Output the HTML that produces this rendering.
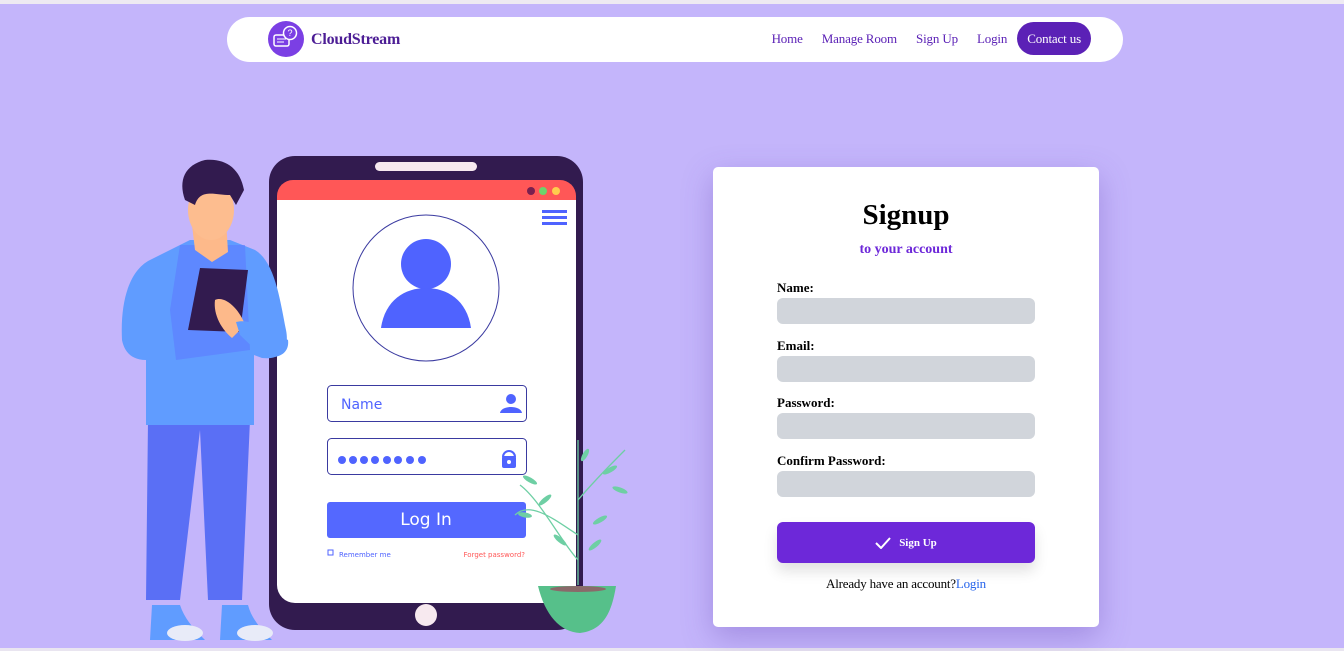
<!DOCTYPE html>
<html><head><meta charset="utf-8"><style>
*{margin:0;padding:0;box-sizing:border-box}
body{width:1344px;height:651px;background:#c4b5fb;font-family:"Liberation Serif",serif;position:relative;overflow:hidden}
.top{position:absolute;left:0;top:0;width:1344px;height:4px;background:#eeeaf2}
.bot{position:absolute;left:0;top:648px;width:1344px;height:3px;background:#e9e5f0}
nav{position:absolute;left:227px;top:17px;width:896px;height:45px;background:#fff;border-radius:23px}
.logo{position:absolute;left:41px;top:4px;width:36px;height:36px;border-radius:50%;background:#7b3fe4}
.brand{position:absolute;left:84px;top:14px;font-weight:bold;font-size:16px;color:#4c1d95;letter-spacing:-0.2px}
.links{position:absolute;right:32px;top:5px;height:33px;display:flex;align-items:center;font-size:13px;color:#5b21b6;letter-spacing:-0.15px}
.links span{margin-left:19px}
.links .c{background:#5b21b6;color:#fff;border-radius:17px;padding:0 10px;height:33px;line-height:33px;margin-left:10px}
.card{position:absolute;left:713px;top:167px;width:386px;height:460px;background:#fff;border-radius:5px;box-shadow:0 10px 30px rgba(100,70,180,.35)}
h1{position:absolute;top:32px;width:100%;text-align:center;font-size:29px}
.sub{position:absolute;top:75px;width:100%;text-align:center;font-size:14px;font-weight:bold;color:#6d28d9}
label{position:absolute;left:64px;font-weight:bold;font-size:13px}
.in{position:absolute;left:64px;width:258px;height:26px;background:#d1d5db;border-radius:6px}
.btn{position:absolute;left:64px;top:355px;width:258px;height:41px;background:#6d28d9;border-radius:6px;color:#fff;font-size:11px;font-weight:bold;display:flex;align-items:center;justify-content:center;box-shadow:0 8px 14px rgba(0,0,0,.12)}
.al{position:absolute;top:409px;width:100%;text-align:center;font-size:13px;letter-spacing:-0.2px}
.al a{color:#2563eb}
</style></head><body>
<div class="top"></div><div class="bot"></div>
<nav><div class="logo"><svg width="36" height="36" viewBox="0 0 36 36"><rect x="6" y="14" width="15" height="11" rx="2" fill="none" stroke="#fff" stroke-width="1.5"/><line x1="9" y1="18" x2="18" y2="18" stroke="#fff"/><line x1="9" y1="21" x2="16" y2="21" stroke="#fff"/><circle cx="22" cy="12" r="6.5" fill="#7b3fe4" stroke="#fff" stroke-width="1.5"/><text x="22" y="15" font-size="9" fill="#fff" text-anchor="middle" font-family="Liberation Sans">?</text></svg></div><div class="brand">CloudStream</div>
<div class="links"><span>Home</span><span>Manage Room</span><span>Sign Up</span><span>Login</span><span class="c">Contact us</span></div></nav>

<svg style="position:absolute;left:0;top:0" width="700" height="651">
<rect x="269" y="156" width="314" height="474" rx="26" fill="#321b4f"/>
<path d="M277 200 V585 a18 18 0 0 0 18 18 H576 V200Z" fill="#fff"/>
<path d="M277 200 V196 a16 16 0 0 1 16 -16 H560 a16 16 0 0 1 16 16 V200Z" fill="#ff5757"/>
<rect x="375" y="162" width="102" height="9" rx="4.5" fill="#f7e9ef"/>
<circle cx="531" cy="191" r="4" fill="#7a1f4f"/><circle cx="543" cy="191" r="4" fill="#6dd36b"/><circle cx="556" cy="191" r="4" fill="#ffcc4d"/>
<rect x="542" y="210" width="25" height="3" fill="#4f63ff"/><rect x="542" y="216" width="25" height="3" fill="#4f63ff"/><rect x="542" y="222" width="25" height="3" fill="#4f63ff"/>
<circle cx="426" cy="288" r="73" fill="#fff" stroke="#3a3aa0"/>
<circle cx="426" cy="264" r="25" fill="#4f63ff"/>
<path d="M381 328 C385 300 405 288 426 288 C447 288 467 300 471 328Z" fill="#4f63ff"/>
<rect x="327.5" y="385.5" width="199" height="36" rx="4" fill="#fff" stroke="#3a3aa0"/>
<text x="341" y="409" font-family="DejaVu Sans" font-size="14" fill="#4f63ff">Name</text>
<circle cx="511" cy="399" r="5" fill="#4f63ff"/><path d="M500 413 C501 405 521 405 522 413Z" fill="#4f63ff"/>
<rect x="327.5" y="438.5" width="199" height="36" rx="4" fill="#fff" stroke="#3a3aa0"/>
<g fill="#4f63ff"><circle cx="342" cy="460" r="4"/><circle cx="353" cy="460" r="4"/><circle cx="364" cy="460" r="4"/><circle cx="375" cy="460" r="4"/><circle cx="387" cy="460" r="4"/><circle cx="398" cy="460" r="4"/><circle cx="410" cy="460" r="4"/><circle cx="422" cy="460" r="4"/></g>
<path d="M503 457 a6 6 0 0 1 12 0" fill="none" stroke="#4f63ff" stroke-width="2"/><rect x="502" y="456" width="14" height="12" rx="2" fill="#4f63ff"/><circle cx="509" cy="462" r="2" fill="#fff"/>
<rect x="327" y="502" width="199" height="36" rx="3" fill="#5468ff"/>
<text x="426" y="525" font-family="DejaVu Sans" font-size="17" fill="#fff" text-anchor="middle">Log In</text>
<rect x="328" y="550" width="5" height="5" fill="none" stroke="#4f63ff"/>
<text x="339" y="557" font-family="DejaVu Sans" font-size="7" fill="#4f63ff">Remember me</text>
<text x="525" y="557" font-family="DejaVu Sans" font-size="7" fill="#ff5757" text-anchor="end">Forget password?</text>
<circle cx="426" cy="615" r="11" fill="#f7e9ef"/>
<path d="M148 420 L146 600 L180 600 L200 430 L208 600 L242 600 L250 420Z" fill="#5a6ff5"/>
<path d="M150 260 C130 270 120 300 122 340 C124 350 130 360 146 360 L146 425 L254 425 L254 355 L262 358 C280 360 290 350 286 330 C280 300 275 262 255 250 L230 240 L190 240Z" fill="#609cff"/>
<path d="M180 245 L170 310 L176 360 L250 350 L245 245Z" fill="#5d7bff" opacity=".6"/>
<path d="M192 225 L195 250 L212 262 L228 252 L226 220Z" fill="#fdb98a"/>
<ellipse cx="211" cy="210" rx="23" ry="30" fill="#fdbd8f"/>
<path d="M185 200 C178 180 185 165 205 160 C225 158 240 168 244 190 L236 205 L230 195 C215 195 200 188 195 205Z" fill="#321b4f"/>
<path d="M200 268 L248 270 L240 332 L188 330Z" fill="#321b4f"/>
<path d="M215 300 C225 295 240 310 245 325 L232 338 C222 330 213 315 215 300Z" fill="#fdb98a"/>
<path d="M236 322 C250 318 270 330 288 340 C290 355 275 360 262 356 L240 335Z" fill="#609cff"/>
<path d="M152 605 L150 640 L205 640 C195 630 185 620 180 605Z" fill="#609cff"/>
<path d="M222 605 L220 640 L272 640 C262 630 252 620 248 605Z" fill="#609cff"/>
<ellipse cx="185" cy="633" rx="18" ry="8" fill="#e8ebf8"/><ellipse cx="255" cy="633" rx="18" ry="8" fill="#e8ebf8"/>
<g stroke="#6ecfa4" stroke-width="1.3" fill="none"><path d="M578 585 L578 440"/><path d="M578 560 C560 540 540 500 520 485"/><path d="M578 500 C595 480 615 460 625 450"/><path d="M578 535 C555 520 530 500 515 515"/></g>
<g fill="#6ecfa4"><ellipse cx="530" cy="480" rx="8" ry="2.5" transform="rotate(30 530 480)"/><ellipse cx="545" cy="500" rx="8" ry="2.5" transform="rotate(-40 545 500)"/><ellipse cx="610" cy="470" rx="8" ry="2.5" transform="rotate(-30 610 470)"/><ellipse cx="620" cy="490" rx="8" ry="2.5" transform="rotate(20 620 490)"/><ellipse cx="600" cy="520" rx="8" ry="2.5" transform="rotate(-30 600 520)"/><ellipse cx="560" cy="540" rx="8" ry="2.5" transform="rotate(40 560 540)"/><ellipse cx="595" cy="545" rx="8" ry="2.5" transform="rotate(-40 595 545)"/><ellipse cx="585" cy="455" rx="7" ry="2.5" transform="rotate(-60 585 455)"/><ellipse cx="525" cy="515" rx="7" ry="2.5" transform="rotate(10 525 515)"/></g>
<path d="M538 586 L616 586 C612 610 605 630 580 633 C560 632 545 615 538 586Z" fill="#56c08a"/>
<ellipse cx="578" cy="589" rx="28" ry="3" fill="#8a6a6a"/>
</svg>

<div class="card">
<h1>Signup</h1><div class="sub">to your account</div>
<label style="top:113px">Name:</label><div class="in" style="top:131px"></div>
<label style="top:171px">Email:</label><div class="in" style="top:189px"></div>
<label style="top:228px">Password:</label><div class="in" style="top:246px"></div>
<label style="top:286px">Confirm Password:</label><div class="in" style="top:304px"></div>
<div class="btn"><svg width="16" height="12" viewBox="0 0 16 12" style="margin-right:8px"><path d="M1 6 L6 11 L15 1" fill="none" stroke="#fff" stroke-width="2"/></svg>Sign Up</div>
<div class="al">Already have an account?<a>Login</a></div>
</div>
</body></html>
